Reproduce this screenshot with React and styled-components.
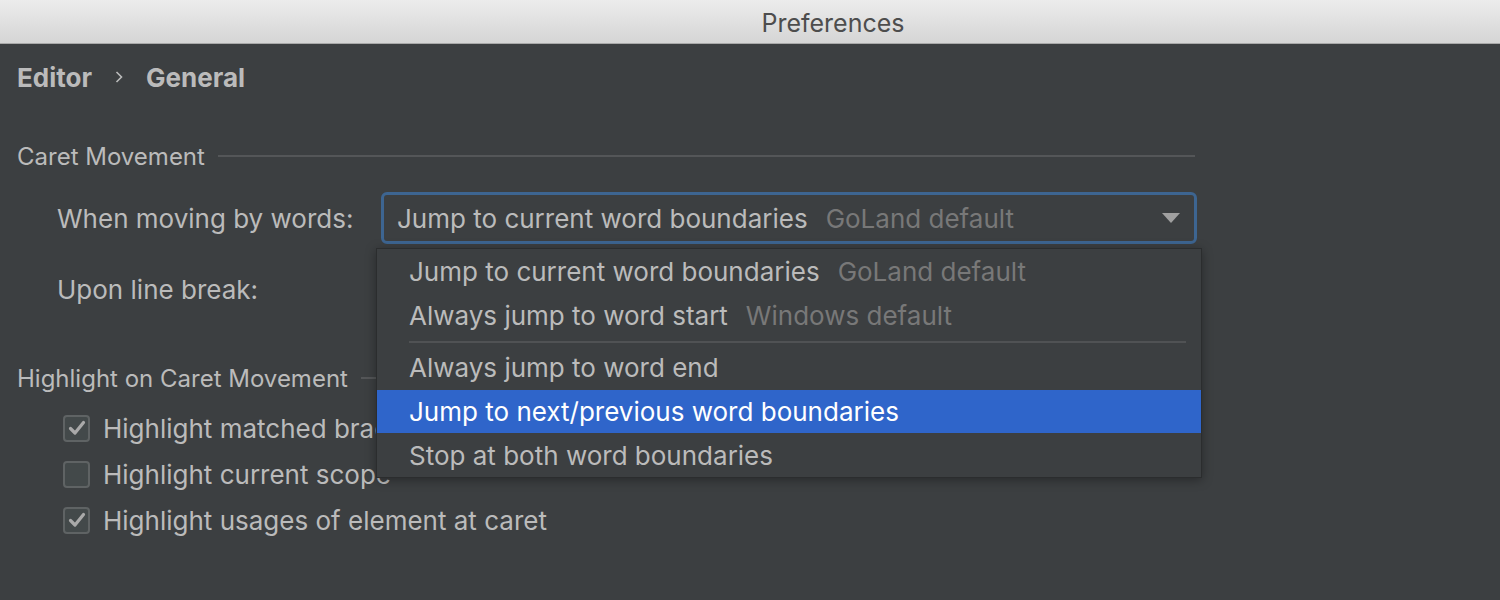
import styled, { createGlobalStyle } from 'styled-components';

const GlobalStyle = createGlobalStyle`
  html, body {
    margin: 0;
    padding: 0;
    background: #3c3f41;
  }
  * {
    box-sizing: border-box;
  }
`;

const Window = styled.div`
  width: 1500px;
  height: 600px;
  overflow: hidden;
  background: #3c3f41;
  font-family: 'Inter', 'Liberation Sans', sans-serif;
  color: #bbbbbb;
`;

const TitleBar = styled.div`
  height: 44px;
  display: flex;
  align-items: center;
  justify-content: center;
  padding: 3px 0 0 166px;
  background: linear-gradient(#ececec, #d5d5d5);
  border-bottom: 1px solid #a9a9a9;
  color: #4d4d4d;
  font-size: 25px;
`;

const Content = styled.div`
  display: flex;
  flex-direction: column;
  padding: 0 17px;
`;

const Breadcrumb = styled.div`
  margin-top: 12px;
  height: 42px;
  display: flex;
  align-items: center;
  gap: 20px;
  font-size: 26px;
  font-weight: 700;
  color: #bbbbbb;
`;

const Chevron = styled.svg`
  width: 10px;
  height: 14px;
  margin: 0 2px;
`;

const SectionTitle = styled.div`
  margin-top: ${(p) => p.$gap}px;
  height: 30px;
  display: flex;
  align-items: center;
  gap: 13px;
  font-size: 24px;
  width: 1178px;

  &::after {
    content: '';
    flex: 1;
    height: 2px;
    background: #545658;
  }
`;

const FieldRow = styled.div`
  margin-top: ${(p) => p.$gap}px;
  height: ${(p) => p.$height}px;
  display: flex;
  align-items: center;
  font-size: 26px;
`;

const Label = styled.div`
  width: 364px;
  padding-left: 40px;
`;

const ComboWrap = styled.div`
  position: relative;
`;

const Combo = styled.div`
  width: 816px;
  height: 52px;
  border: 3px solid #3d6591;
  border-radius: 6px;
  display: flex;
  align-items: center;
  padding: 0 14px 0 13px;
  font-size: 26px;
`;

const Hint = styled.span`
  color: #787878;
  margin-left: 18px;
`;

const Arrow = styled.svg`
  margin-left: auto;
  width: 18px;
  height: 10px;
`;

const Popup = styled.div`
  position: absolute;
  left: -5px;
  top: 56px;
  width: 826px;
  height: 230px;
  background: #3c3f41;
  border: 1px solid #2b2d2e;
  box-shadow: 0 2px 10px rgba(0, 0, 0, 0.35);
  display: flex;
  flex-direction: column;
  z-index: 2;
`;

const Item = styled.div`
  height: 44px;
  display: flex;
  align-items: center;
  padding-left: 32px;
  font-size: 26px;
  background: ${(p) => (p.$active ? '#2f65ca' : 'transparent')};
  color: ${(p) => (p.$active ? '#ffffff' : '#bbbbbb')};
`;

const Separator = styled.div`
  height: 9px;
  display: flex;
  align-items: center;
  padding: 0 15px 0 32px;

  &::after {
    content: '';
    flex: 1;
    height: 2px;
    background: #505254;
  }
`;

const CheckRow = styled.div`
  height: 46px;
  display: flex;
  align-items: center;
  gap: 13px;
  padding-left: 46px;
  font-size: 26px;
  margin-top: ${(p) => p.$gap || 0}px;
`;

const Box = styled.div`
  width: 27px;
  height: 27px;
  border: 2px solid #5f6364;
  border-radius: 4px;
  background: #43494a;
  display: flex;
  align-items: center;
  justify-content: center;
`;

function Checkbox({ checked }) {
  return (
    <Box>
      {checked && (
        <svg width="18" height="16" viewBox="0 0 18 16">
          <path d="M2.5 8.5 L7 13 L15.5 2.5" fill="none" stroke="#a9a9a9" strokeWidth="3.2" strokeLinecap="round" strokeLinejoin="round" />
        </svg>
      )}
    </Box>
  );
}

const options = [
  { text: 'Jump to current word boundaries', hint: 'GoLand default' },
  { text: 'Always jump to word start', hint: 'Windows default' },
  { sep: true },
  { text: 'Always jump to word end' },
  { text: 'Jump to next/previous word boundaries', active: true },
  { text: 'Stop at both word boundaries' },
];

export default function App() {
  return (
    <Window>
      <GlobalStyle />
      <TitleBar>Preferences</TitleBar>
      <Content>
        <Breadcrumb>
          <span>Editor</span>
          <Chevron viewBox="0 0 10 14">
            <path d="M2.5 2 L7.5 7 L2.5 12" fill="none" stroke="#bbbbbb" strokeWidth="1.6" />
          </Chevron>
          <span>General</span>
        </Breadcrumb>

        <SectionTitle $gap={43}>Caret Movement</SectionTitle>

        <FieldRow $gap={21} $height={52}>
          <Label>When moving by words:</Label>
          <ComboWrap>
            <Combo>
              Jump to current word boundaries
              <Hint>GoLand default</Hint>
              <Arrow viewBox="0 0 18 10">
                <path d="M0 0 H18 L9 10 Z" fill="#a0a0a0" />
              </Arrow>
            </Combo>
            <Popup>
              <div style={{ height: 1 }} />
              {options.map((o, i) =>
                o.sep ? (
                  <Separator key={i} />
                ) : (
                  <Item key={i} $active={o.active}>
                    {o.text}
                    {o.hint && <Hint>{o.hint}</Hint>}
                  </Item>
                )
              )}
            </Popup>
          </ComboWrap>
        </FieldRow>

        <FieldRow $gap={23} $height={44}>
          <Label>Upon line break:</Label>
        </FieldRow>

        <SectionTitle $gap={52}>Highlight on Caret Movement</SectionTitle>

        <CheckRow $gap={12}>
          <Checkbox checked />
          Highlight matched brace
        </CheckRow>
        <CheckRow>
          <Checkbox />
          Highlight current scope
        </CheckRow>
        <CheckRow>
          <Checkbox checked />
          Highlight usages of element at caret
        </CheckRow>
      </Content>
    </Window>
  );
}
